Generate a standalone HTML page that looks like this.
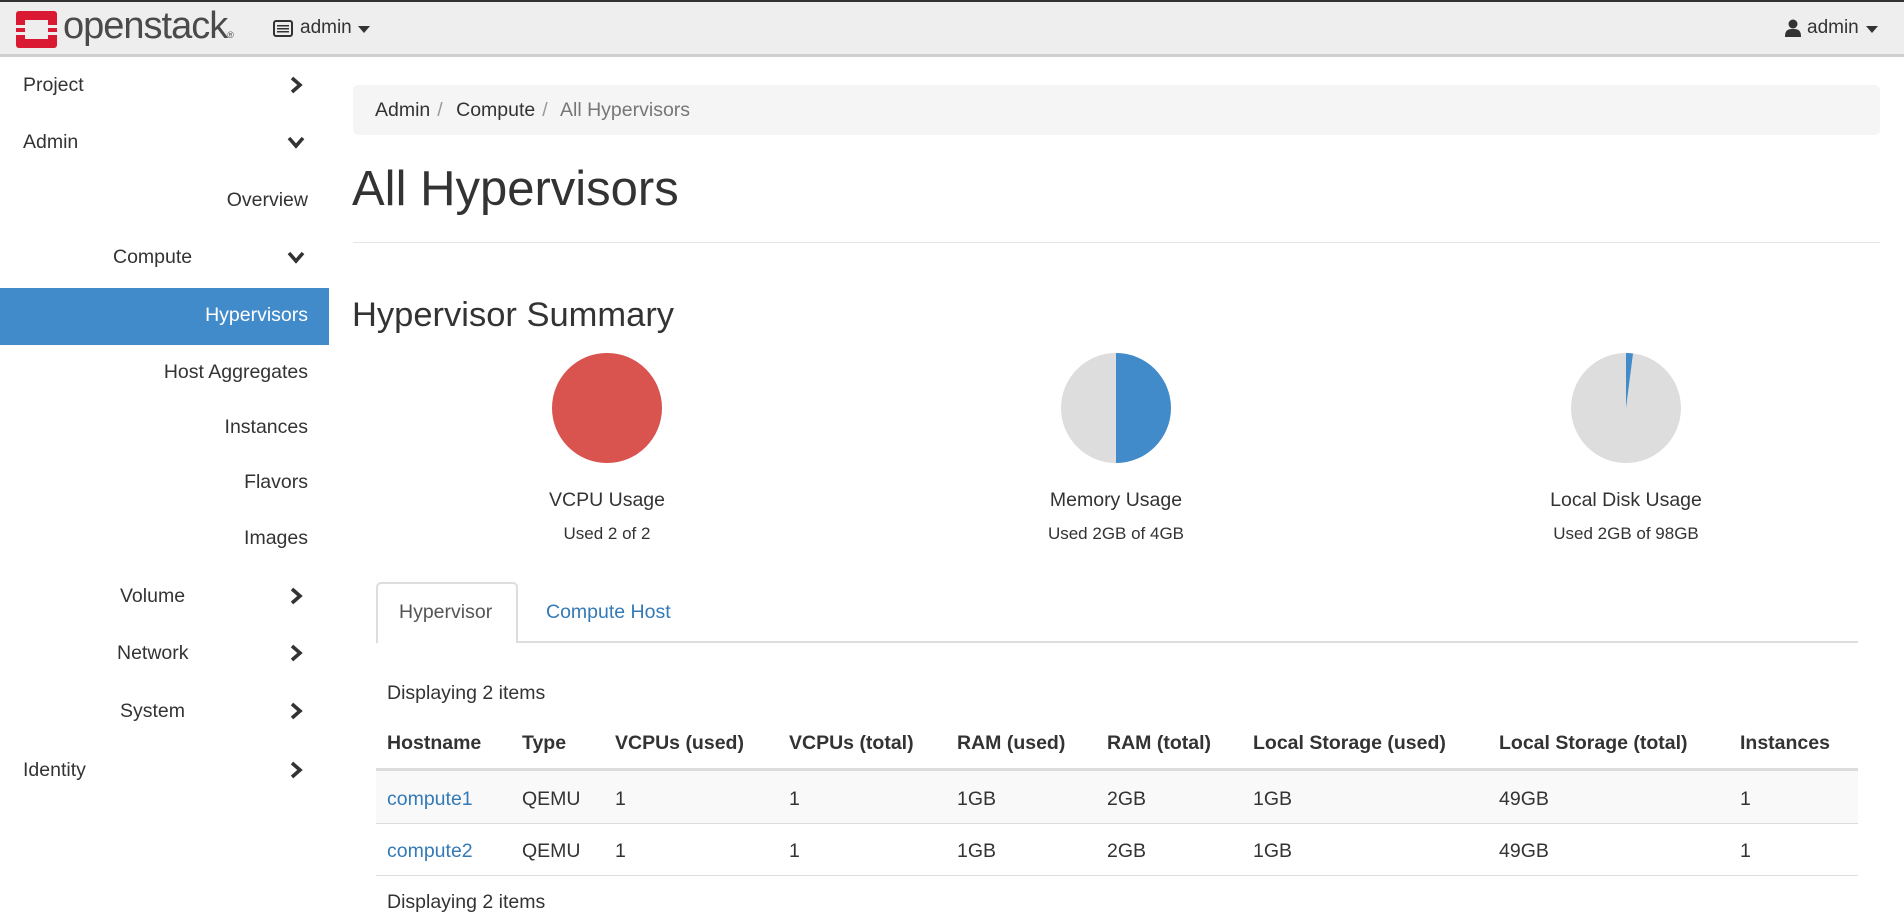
<!DOCTYPE html>
<html><head><meta charset="utf-8"><style>
*{box-sizing:border-box;margin:0;padding:0}
body{width:1904px;height:920px;overflow:hidden;background:#fff;font-family:"Liberation Sans",Arial,sans-serif;font-size:19.5px;color:#333;position:relative}
.nav{position:absolute;left:0;top:0;width:1904px;height:57px;background:#eeeeee;border-top:2px solid #333;border-bottom:3px solid #cfcfcf}
.abs{position:absolute;white-space:nowrap}
.si{position:absolute;white-space:nowrap;color:#333}
.chev{position:absolute;left:287px;width:18px;height:18px}
.act{position:absolute;left:0;top:288px;width:329px;height:57px;background:#428bca}
.bc{position:absolute;left:353px;top:85px;width:1527px;height:50px;background:#f5f5f5;border-radius:5px}
a{color:#337ab7;text-decoration:none}
.th{font-weight:bold}
</style></head><body>
<div class="nav">
  <svg class="abs" style="left:16px;top:9px" width="41" height="37" viewBox="0 0 41 37"><rect x="0" y="0" width="41" height="37" rx="3" fill="#da1a32"/><rect x="9" y="9" width="23" height="19" fill="#eeeeee"/><rect x="0" y="14" width="9" height="3" fill="#eeeeee"/><rect x="0" y="21" width="9" height="3" fill="#eeeeee"/><rect x="32" y="14" width="9" height="3" fill="#eeeeee"/><rect x="32" y="21" width="9" height="3" fill="#eeeeee"/></svg>
  <div class="abs" style="left:63px;top:3px;font-size:38px;color:#4a4a4a;letter-spacing:-1px">openstack<span style="font-size:9px">®</span></div>
  <svg class="abs" style="left:273px;top:18px" width="20" height="17" viewBox="0 0 20 17"><rect x="1" y="1" width="18" height="15" rx="2" fill="none" stroke="#333" stroke-width="2"/><rect x="4" y="5" width="12" height="1.5" fill="#333"/><rect x="4" y="8" width="12" height="1.5" fill="#333"/><rect x="4" y="11" width="12" height="1.5" fill="#333"/></svg>
  <div class="abs" style="left:300px;top:15px;font-size:19px">admin</div>
  <svg class="abs" style="left:358px;top:24px" width="12" height="7"><path d="M0 0h12L6 7z" fill="#333"/></svg>
  <svg class="abs" style="left:1785px;top:17px" width="16" height="18" viewBox="0 0 16 18"><circle cx="8" cy="5" r="4.5" fill="#333"/><path d="M0 18c0-7 3-8 8-8s8 1 8 8z" fill="#333"/></svg>
  <div class="abs" style="left:1807px;top:15px;font-size:19px">admin</div>
  <svg class="abs" style="left:1866px;top:24px" width="12" height="7"><path d="M0 0h12L6 7z" fill="#333"/></svg>
</div>

<div class="act"></div>
<div class="si" style="left:23px;top:74px">Project</div>
<div class="si" style="left:23px;top:131px">Admin</div>
<div class="si" style="right:1596px;top:189px">Overview</div>
<div class="si" style="left:113px;top:246px">Compute</div>
<div class="si" style="right:1596px;top:304px;color:#fff">Hypervisors</div>
<div class="si" style="right:1596px;top:361px">Host Aggregates</div>
<div class="si" style="right:1596px;top:416px">Instances</div>
<div class="si" style="right:1596px;top:471px">Flavors</div>
<div class="si" style="right:1596px;top:527px">Images</div>
<div class="si" style="left:120px;top:585px">Volume</div>
<div class="si" style="left:117px;top:642px">Network</div>
<div class="si" style="left:120px;top:700px">System</div>
<div class="si" style="left:23px;top:759px">Identity</div>
<svg width="0" height="0" style="position:absolute"><defs>
<path id="r" d="M5 2l8 7-8 7" fill="none" stroke="#333" stroke-width="3.6"/>
<path id="d" d="M2 5l7 8 7-8" fill="none" stroke="#333" stroke-width="3.6"/></defs></svg>
<svg class="chev" style="top:76px"><use href="#r"/></svg>
<svg class="chev" style="top:133px"><use href="#d"/></svg>
<svg class="chev" style="top:248px"><use href="#d"/></svg>
<svg class="chev" style="top:587px"><use href="#r"/></svg>
<svg class="chev" style="top:644px"><use href="#r"/></svg>
<svg class="chev" style="top:702px"><use href="#r"/></svg>
<svg class="chev" style="top:761px"><use href="#r"/></svg>

<div class="bc"></div>
<div class="abs" style="left:375px;top:99px">Admin<span style="color:#999;padding:0 8px 0 7px">/</span> Compute<span style="color:#999;padding:0 8px 0 7px">/</span> <span style="color:#777">All Hypervisors</span></div>
<div class="abs" style="left:352px;top:161px;font-size:49px;color:#333">All Hypervisors</div>
<div class="abs" style="left:353px;top:242px;width:1527px;height:1px;background:#e5e5e5"></div>
<div class="abs" style="left:352px;top:296px;font-size:34.5px">Hypervisor Summary</div>

<svg class="abs" style="left:552px;top:353px" width="110" height="110"><circle cx="55" cy="55" r="55" fill="#d9534f"/></svg>
<svg class="abs" style="left:1061px;top:353px" width="110" height="110"><circle cx="55" cy="55" r="55" fill="#dddddd"/><path d="M55 0A55 55 0 0 1 55 110Z" fill="#428bca"/></svg>
<svg class="abs" style="left:1571px;top:353px" width="110" height="110"><circle cx="55" cy="55" r="55" fill="#dddddd"/><path d="M55 55L55 0A55 55 0 0 1 62 .5Z" fill="#428bca"/></svg>
<div class="abs" style="left:457px;width:300px;text-align:center;top:489px">VCPU Usage</div>
<div class="abs" style="left:457px;width:300px;text-align:center;top:524px;font-size:17px">Used 2 of 2</div>
<div class="abs" style="left:966px;width:300px;text-align:center;top:489px">Memory Usage</div>
<div class="abs" style="left:966px;width:300px;text-align:center;top:524px;font-size:17px">Used 2GB of 4GB</div>
<div class="abs" style="left:1476px;width:300px;text-align:center;top:489px">Local Disk Usage</div>
<div class="abs" style="left:1476px;width:300px;text-align:center;top:524px;font-size:17px">Used 2GB of 98GB</div>

<div class="abs" style="left:376px;top:641px;width:1482px;height:2px;background:#ddd"></div>
<div class="abs" style="left:376px;top:582px;width:142px;height:61px;background:#fff;border:2px solid #ddd;border-bottom:none;border-radius:5px 5px 0 0"></div>
<div class="abs" style="left:399px;top:601px;color:#555">Hypervisor</div>
<div class="abs" style="left:546px;top:601px"><a>Compute Host</a></div>

<div class="abs" style="left:387px;top:682px">Displaying 2 items</div>
<div class="abs" style="left:376px;top:768px;width:1482px;height:3px;background:#ddd"></div>
<div class="abs" style="left:376px;top:771px;width:1482px;height:53px;background:#f9f9f9"></div>
<div class="abs" style="left:376px;top:823px;width:1482px;height:1px;background:#ddd"></div>
<div class="abs" style="left:376px;top:875px;width:1482px;height:1px;background:#ddd"></div>
<div class="abs" style="left:387px;top:891px">Displaying 2 items</div>

<div class="abs th" style="left:387px;top:732px">Hostname</div>
<div class="abs th" style="left:522px;top:732px">Type</div>
<div class="abs th" style="left:615px;top:732px">VCPUs (used)</div>
<div class="abs th" style="left:789px;top:732px">VCPUs (total)</div>
<div class="abs th" style="left:957px;top:732px">RAM (used)</div>
<div class="abs th" style="left:1107px;top:732px">RAM (total)</div>
<div class="abs th" style="left:1253px;top:732px">Local Storage (used)</div>
<div class="abs th" style="left:1499px;top:732px">Local Storage (total)</div>
<div class="abs th" style="left:1740px;top:732px">Instances</div>

<div class="abs" style="left:387px;top:788px"><a>compute1</a></div>
<div class="abs" style="left:522px;top:788px">QEMU</div>
<div class="abs" style="left:615px;top:788px">1</div>
<div class="abs" style="left:789px;top:788px">1</div>
<div class="abs" style="left:957px;top:788px">1GB</div>
<div class="abs" style="left:1107px;top:788px">2GB</div>
<div class="abs" style="left:1253px;top:788px">1GB</div>
<div class="abs" style="left:1499px;top:788px">49GB</div>
<div class="abs" style="left:1740px;top:788px">1</div>

<div class="abs" style="left:387px;top:840px"><a>compute2</a></div>
<div class="abs" style="left:522px;top:840px">QEMU</div>
<div class="abs" style="left:615px;top:840px">1</div>
<div class="abs" style="left:789px;top:840px">1</div>
<div class="abs" style="left:957px;top:840px">1GB</div>
<div class="abs" style="left:1107px;top:840px">2GB</div>
<div class="abs" style="left:1253px;top:840px">1GB</div>
<div class="abs" style="left:1499px;top:840px">49GB</div>
<div class="abs" style="left:1740px;top:840px">1</div>
</body></html>
